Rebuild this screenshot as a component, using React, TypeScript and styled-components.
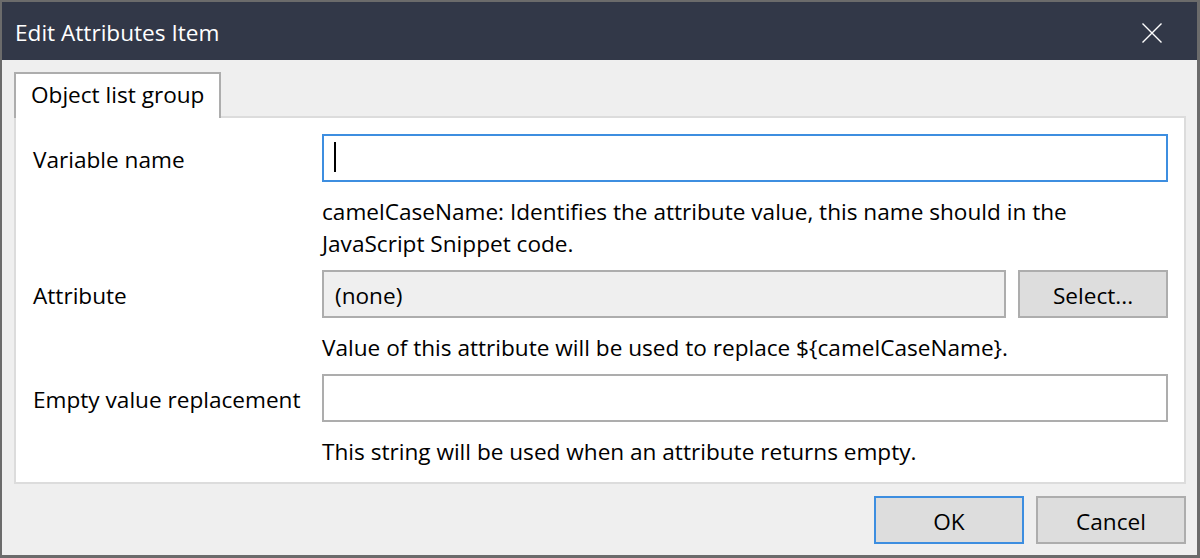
import React from "react";
import styled, { createGlobalStyle } from "styled-components";

const GlobalStyle = createGlobalStyle`
  html, body { margin: 0; padding: 0; background: #ffffff; }
  * { box-sizing: border-box; }
  body { font-family: "Open Sans", "Noto Sans", "Liberation Sans", sans-serif; }
`;

const FONT_SIZE = "22.6px";

const Window = styled.div`
  width: 1200px;
  height: 558px;
  display: flex;
  flex-direction: column;
  border-style: solid;
  border-color: #6b6b6b;
  border-width: 2px 3px 3px 2px;
  font-size: ${FONT_SIZE};
  color: #000000;
`;

const TitleBar = styled.div`
  height: 58px;
  flex: none;
  background: #323848;
  display: flex;
  align-items: center;
  justify-content: space-between;
  padding: 0 35px 0 13px;
`;

const Title = styled.div`
  color: #ffffff;
  font-size: ${FONT_SIZE};
  line-height: 1;
  padding-top: 4px;
`;

const CloseButton = styled.div`
  width: 20px;
  height: 20px;
  display: flex;
  align-items: center;
  justify-content: center;
  margin-top: 3px;
`;

const Body = styled.div`
  flex: 1;
  background: #efefef;
  display: flex;
  flex-direction: column;
  padding: 12px 11px 11px 12px;
`;

const TabStrip = styled.div`
  display: flex;
`;

const Tab = styled.div`
  position: relative;
  z-index: 1;
  height: 46px;
  margin-bottom: -2px;
  background: #ffffff;
  border: 2px solid #adadad;
  border-bottom: none;
  padding: 0 15px 2px 15px;
  display: flex;
  align-items: center;
  line-height: 1;
`;

const Panel = styled.div`
  flex: 1;
  background: #ffffff;
  border: 2px solid #dcdcdc;
  padding: 16px 16px 14px 17px;
  display: grid;
  grid-template-columns: 289px 1fr;
  align-content: start;
`;

const Label = styled.div`
  height: 48px;
  display: flex;
  align-items: center;
  padding-top: 3px;
`;

const TextField = styled.div<{ $focused?: boolean; $disabled?: boolean }>`
  height: 48px;
  border: 2px solid ${(p) => (p.$focused ? "#3d8ee0" : "#adadad")};
  background: ${(p) => (p.$disabled ? "#efefef" : "#ffffff")};
  display: flex;
  align-items: center;
  padding: 2px 11px 0 11px;
  flex: 1;
`;

const Caret = styled.span`
  display: block;
  width: 2px;
  height: 30px;
  background: #000000;
  margin-left: -1px;
  margin-top: -4px;
`;

const FieldRow = styled.div`
  display: flex;
  gap: 12px;
`;

const Help = styled.div<{ $last?: boolean }>`
  grid-column: 2;
  line-height: 32px;
  margin: 14px 0 ${(p) => (p.$last ? "0" : "10px")} 0;
`;

const Button = styled.div<{ $default?: boolean }>`
  width: 150px;
  height: 48px;
  flex: none;
  border: 2px solid ${(p) => (p.$default ? "#3d8ee0" : "#adadad")};
  background: #dddddd;
  display: flex;
  align-items: center;
  justify-content: center;
  padding-top: 2px;
`;

const Footer = styled.div`
  margin-top: 12px;
  display: flex;
  justify-content: flex-end;
  gap: 12px;
`;

export default function App() {
  return (
    <>
      <GlobalStyle />
      <Window>
        <TitleBar>
          <Title>Edit Attributes Item</Title>
          <CloseButton>
            <svg width="20" height="20" viewBox="0 0 20 20">
              <path d="M0.5 0.5 L19.5 19.5 M19.5 0.5 L0.5 19.5" stroke="#ffffff" strokeWidth="1.4" fill="none" />
            </svg>
          </CloseButton>
        </TitleBar>
        <Body>
          <TabStrip>
            <Tab>Object list group</Tab>
          </TabStrip>
          <Panel>
            <Label>Variable name</Label>
            <TextField $focused>
              <Caret />
            </TextField>
            <Help>
              camelCaseName: Identifies the attribute value, this name should in the
              <br />
              JavaScript Snippet code.
            </Help>
            <Label>Attribute</Label>
            <FieldRow>
              <TextField $disabled>(none)</TextField>
              <Button>Select...</Button>
            </FieldRow>
            <Help>Value of this attribute will be used to replace ${"{camelCaseName}"}.</Help>
            <Label>Empty value replacement</Label>
            <TextField />
            <Help $last>This string will be used when an attribute returns empty.</Help>
          </Panel>
          <Footer>
            <Button $default>OK</Button>
            <Button>Cancel</Button>
          </Footer>
        </Body>
      </Window>
    </>
  );
}
